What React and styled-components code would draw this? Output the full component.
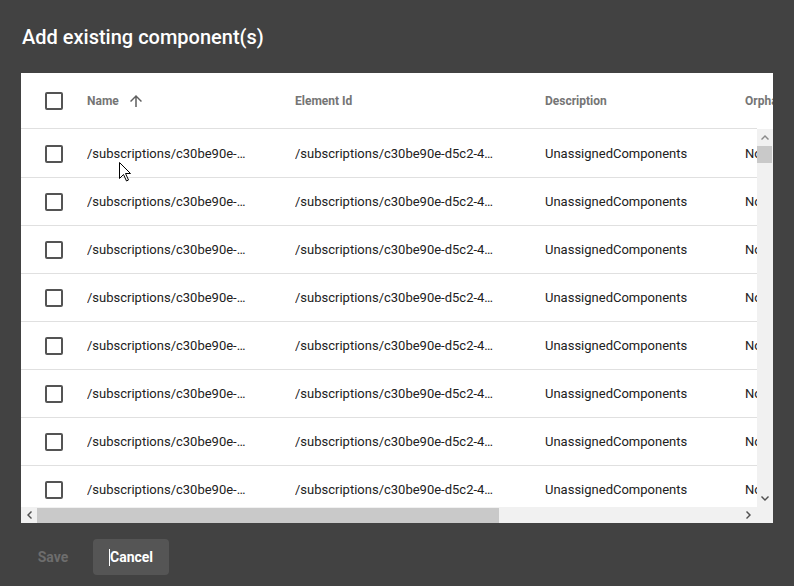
import React from "react";
import styled, { createGlobalStyle } from "styled-components";

const Global = createGlobalStyle`
  html, body { margin: 0; padding: 0; background: #424242; }
  body { font-family: Roboto, "Noto Sans", "Liberation Sans", sans-serif; }
  * { box-sizing: border-box; }
`;

const Dialog = styled.div`
  position: relative;
  width: 794px;
  height: 586px;
  background: #424242;
  padding: 21px 21px 0;
  display: flex;
  flex-direction: column;
`;

const Title = styled.h2`
  margin: 0 0 20px 1px;
  font-size: 20px;
  line-height: 32px;
  font-weight: 500;
  color: #ffffff;
  letter-spacing: 0;
`;

const Panel = styled.div`
  width: 752px;
  height: 450px;
  flex: 0 0 450px;
  background: #ffffff;
  display: grid;
  grid-template-columns: minmax(0, 1fr) 16px;
  grid-template-rows: 56px minmax(0, 1fr) 16px;
  overflow: hidden;
`;

const cols = "66px 208px 250px 200px 200px";

const HeaderRow = styled.div`
  grid-column: 1;
  grid-row: 1;
  display: grid;
  grid-template-columns: ${cols};
  align-items: center;
  border-bottom: 1px solid #e0e0e0;
  overflow: visible;
  min-width: 0;
`;

const Body = styled.div`
  grid-column: 1;
  grid-row: 2;
  overflow: hidden;
  padding-top: 1px;
  min-width: 0;
`;

const Row = styled.div`
  display: grid;
  grid-template-columns: ${cols};
  align-items: center;
  height: 48px;
  border-bottom: 1px solid #e0e0e0;
  width: 924px;
`;

const CheckCell = styled.div`
  padding-left: 24px;
  display: flex;
  align-items: center;
`;

const Checkbox = styled.span`
  display: block;
  width: 18px;
  height: 18px;
  border: 2px solid #545454;
  border-radius: 2px;
`;

const HeadCell = styled.div`
  display: flex;
  align-items: center;
  font-size: 12px;
  font-weight: 700;
  color: #757575;
  white-space: nowrap;
`;

const SortIcon = styled.svg`
  width: 18px;
  height: 18px;
  margin-left: 8px;
  fill: #5f5f5f;
`;

const Cell = styled.div`
  font-size: 13px;
  color: #212121;
  white-space: nowrap;
  overflow: hidden;
  text-overflow: ellipsis;
  padding-right: ${(p) => p.$pr || 0}px;
`;

const VScroll = styled.div`
  grid-column: 2;
  grid-row: 2;
  background: #f1f1f1;
  display: flex;
  flex-direction: column;
  min-height: 0;
`;

const HScroll = styled.div`
  grid-column: 1;
  grid-row: 3;
  background: #f1f1f1;
  display: flex;
  flex-direction: row;
  min-width: 0;
`;

const Corner = styled.div`
  grid-column: 2;
  grid-row: 3;
  background: #f1f1f1;
`;

const ArrowBtn = styled.div`
  flex: 0 0 16px;
  width: 16px;
  height: 16px;
  display: flex;
  align-items: center;
  justify-content: center;
  svg { width: 8px; height: 8px; fill: ${(p) => (p.$dim ? "#8a8a8a" : "#505050")}; }
`;

const Thumb = styled.div`
  background: #c9c9c9;
  flex: 0 0 ${(p) => p.$size}px;
  margin: ${(p) => (p.$vertical ? "1px 1px 0 0" : "1px 0 0 0")};
`;

const Spacer = styled.div`
  flex: 1;
`;

const Footer = styled.div`
  display: flex;
  gap: 8px;
  margin-top: 16px;
`;

const Button = styled.button`
  height: 36px;
  min-width: 64px;
  padding: 0 16px;
  border: none;
  border-radius: 4px;
  font-family: Roboto, "Noto Sans", "Liberation Sans", sans-serif;
  font-size: 14px;
  font-weight: 700;
  background: ${(p) => (p.$filled ? "#555555" : "transparent")};
  color: ${(p) => (p.disabled ? "#6d6d6d" : "#ffffff")};
  display: flex;
  align-items: center;
  justify-content: center;
`;

const Caret = styled.span`
  display: inline-block;
  width: 1px;
  height: 17px;
  background: #ffffff;
`;

const Pointer = styled.svg`
  position: absolute;
  left: 119px;
  top: 162px;
  width: 13px;
  height: 20px;
`;

const Arrow = ({ dir }) => {
  const paths = {
    up: "M0 6 L4 2 L8 6 L7 7 L4 4 L1 7 Z",
    down: "M0 2 L4 6 L8 2 L7 1 L4 4 L1 1 Z",
    left: "M6 0 L2 4 L6 8 L7 7 L4 4 L7 1 Z",
    right: "M2 0 L6 4 L2 8 L1 7 L4 4 L1 1 Z",
  };
  return (
    <svg viewBox="0 0 8 8">
      <path d={paths[dir]} />
    </svg>
  );
};

const rows = Array.from({ length: 8 }, (_, i) => i);
const id = "/subscriptions/c30be90e-d5c2-4f1e-9a3b-2c7d8e5f6a10/resourceGroups/rg/providers";

export default function App() {
  return (
    <>
      <Global />
      <Dialog>
        <Title>Add existing component(s)</Title>
        <Panel>
          <HeaderRow>
            <CheckCell>
              <Checkbox />
            </CheckCell>
            <HeadCell>
              Name
              <SortIcon viewBox="0 0 24 24">
                <path d="M4 12l1.41 1.41L11 7.83V20h2V7.83l5.58 5.59L20 12l-8-8-8 8z" />
              </SortIcon>
            </HeadCell>
            <HeadCell>Element Id</HeadCell>
            <HeadCell>Description</HeadCell>
            <HeadCell>Orphan</HeadCell>
          </HeaderRow>
          <Body>
            {rows.map((r) => (
              <Row key={r}>
                <CheckCell>
                  <Checkbox />
                </CheckCell>
                <Cell $pr={48}>{id}</Cell>
                <Cell $pr={50}>{id}</Cell>
                <Cell>UnassignedComponents</Cell>
                <Cell>No</Cell>
              </Row>
            ))}
          </Body>
          <VScroll>
            <ArrowBtn $dim>
              <Arrow dir="up" />
            </ArrowBtn>
            <Thumb $vertical $size={17} />
            <Spacer />
            <ArrowBtn>
              <Arrow dir="down" />
            </ArrowBtn>
          </VScroll>
          <HScroll>
            <ArrowBtn>
              <Arrow dir="left" />
            </ArrowBtn>
            <Thumb $size={462} />
            <Spacer />
            <ArrowBtn>
              <Arrow dir="right" />
            </ArrowBtn>
          </HScroll>
          <Corner />
        </Panel>
        <Footer>
          <Button disabled>Save</Button>
          <Button $filled>
            <Caret />
            Cancel
          </Button>
        </Footer>
        <Pointer viewBox="0 0 13 20">
          <path
            d="M0.5 0.5 L0.5 16.5 L4.5 12.5 L7.5 19 L9.5 18 L6.5 11.5 L11.5 11.5 Z"
            fill="#ffffff"
            stroke="#000000"
            strokeWidth="1"
          />
        </Pointer>
      </Dialog>
    </>
  );
}
